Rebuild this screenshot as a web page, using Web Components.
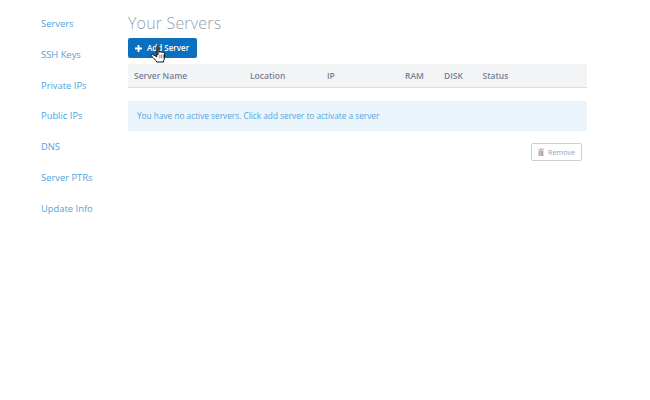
<!DOCTYPE html>
<html>
<head>
<meta charset="utf-8">
<style>
  html, body { margin: 0; padding: 0; background: #fff; }
  body { font-family: "Open Sans", sans-serif; }
</style>
</head>
<body>
<server-page>
  <side-nav slot="nav">
    <nav-link>Servers</nav-link>
    <nav-link>SSH Keys</nav-link>
    <nav-link>Private IPs</nav-link>
    <nav-link>Public IPs</nav-link>
    <nav-link>DNS</nav-link>
    <nav-link>Server PTRs</nav-link>
    <nav-link>Update Info</nav-link>
  </side-nav>
  <page-title>Your Servers</page-title>
  <add-button>Add Server</add-button>
  <server-table></server-table>
  <alert-box>You have no active servers. Click add server to activate a server</alert-box>
  <remove-button>Remove</remove-button>
</server-page>

<script>
class ServerPage extends HTMLElement {
  constructor() {
    super()
    this.attachShadow({ mode: 'open' }).innerHTML = `
      <style>
        :host { display: flex; width: 650px; height: 400px; box-sizing: border-box; padding: 0 63px 0 41px; }
        .nav { width: 87px; flex: none; }
        main { flex: 1; display: flex; flex-direction: column; align-items: flex-start; padding-top: 12px; }
      </style>
      <div class="nav"><slot name="nav"></slot></div>
      <main><slot></slot></main>`
  }
}

class SideNav extends HTMLElement {
  constructor() {
    super()
    this.attachShadow({ mode: 'open' }).innerHTML = `
      <style>
        :host { display: flex; flex-direction: column; padding-top: 9px; }
      </style>
      <slot></slot>`
  }
}

class NavLink extends HTMLElement {
  constructor() {
    super()
    this.attachShadow({ mode: 'open' }).innerHTML = `
      <style>
        :host { display: block; height: 30.83px; font: 400 9.4px/30.83px "Open Sans", sans-serif; color: #4fa3dc; white-space: nowrap; }
      </style>
      <slot></slot>`
  }
}

class PageTitle extends HTMLElement {
  constructor() {
    super()
    this.attachShadow({ mode: 'open' }).innerHTML = `
      <style>
        :host { display: block; height: 26px; font: 300 16px/22px "Open Sans", sans-serif; color: #969daf; letter-spacing: 0.17px; white-space: nowrap; }
      </style>
      <slot></slot>`
  }
}

class AddButton extends HTMLElement {
  constructor() {
    super()
    this.attachShadow({ mode: 'open' }).innerHTML = `
      <style>
        :host { display: flex; position: relative; align-items: center; gap: 5px; width: 69px; height: 20px; box-sizing: border-box; padding-left: 7px; background: #0b6fc0; border-radius: 2px; color: #fff; font: 600 8px/20px "Open Sans", sans-serif; white-space: nowrap; }
        .plus { width: 7px; height: 7px; flex: none; }
        .hand { position: absolute; left: 22px; top: 7px; width: 16px; height: 18px; }
      </style>
      <svg class="plus" viewBox="0 0 7 7"><path d="M2.6 0h1.8v2.6H7v1.8H4.4V7H2.6V4.400H0V2.600h2.600z" fill="#fff"/></svg>
      <span><slot></slot></span>
      <svg class="hand" viewBox="0 0 16 18">
        <path d="M6.800 1.500c0-1 2.200-1 2.200 0v5.700l.4-.1c.5-.6 1.400-.5 1.600.2l.3-.1c.5-.5 1.400-.3 1.500.4l.3-.1c.6-.3 1.400 0 1.400.8v4.400c0 1.400-.5 2.300-1 3.200v1.100H6.500v-1C5 14.600 3.200 13.200 1.400 10.700c-.7-1 .4-2 1.400-1.300l2.400 1.500 1.600 1z" fill="#fff" stroke="#111" stroke-width="1" stroke-linejoin="round"/>
        <path d="M7.900 1.500v8.500" stroke="#111" stroke-width="1.200" fill="none"/>
        <path d="M9.900 9.500v3.800M11.700 9.500v3.800M13.400 9.500v3.800" stroke="#555" stroke-width=".7" fill="none"/>
      </svg>`
  }
}

class ServerTable extends HTMLElement {
  constructor() {
    super()
    const cols = [
      ['Server Name', 116], ['Location', 77], ['IP', 78], ['RAM', 39], ['DISK', 38.5], ['Status', 0]
    ]
    this.attachShadow({ mode: 'open' }).innerHTML = `
      <style>
        :host { display: block; align-self: stretch; margin-top: 6px; }
        .head { display: flex; align-items: center; height: 23px; padding-left: 6px; background: #f3f4f6; border-bottom: 1px solid #dcdde0; font: 600 8.5px/23px "Open Sans", sans-serif; color: #7a8194; white-space: nowrap; }
      </style>
      <div class="head">${cols.map(c => `<span style="width:${c[1]}px">${c[0]}</span>`).join('')}</div>`
  }
}

class AlertBox extends HTMLElement {
  constructor() {
    super()
    this.attachShadow({ mode: 'open' }).innerHTML = `
      <style>
        :host { display: block; align-self: stretch; box-sizing: border-box; height: 30px; margin-top: 13px; padding-left: 9px; background: #ebf4fb; font: 400 8.27px/30px "Open Sans", sans-serif; color: #55a6dd; white-space: nowrap; }
      </style>
      <slot></slot>`
  }
}

class RemoveButton extends HTMLElement {
  constructor() {
    super()
    this.attachShadow({ mode: 'open' }).innerHTML = `
      <style>
        :host { display: flex; align-self: flex-end; align-items: center; gap: 4px; box-sizing: border-box; width: 51px; height: 18px; margin: 12px 5px 0 0; padding-left: 6px; border: 1px solid #cfcfcf; border-radius: 2px; background: #fff; font: 400 7.2px/16px "Open Sans", sans-serif; color: #9aa1b2; white-space: nowrap; }
        svg { width: 6px; height: 8px; flex: none; }
      </style>
      <svg viewBox="0 0 6 8"><path d="M2 0h2v1h2v1H0V1h2z" fill="#cfc4bd"/><path d="M.6 2.500h4.800V8H.6z" fill="#b8a59e"/><path d="M2.400 3.200V7.400" stroke="#efe9e6" stroke-width=".6"/></svg>
      <slot></slot>`
  }
}

customElements.define('server-page', ServerPage)
customElements.define('side-nav', SideNav)
customElements.define('nav-link', NavLink)
customElements.define('page-title', PageTitle)
customElements.define('add-button', AddButton)
customElements.define('server-table', ServerTable)
customElements.define('alert-box', AlertBox)
customElements.define('remove-button', RemoveButton)
</script>
</body>
</html>
